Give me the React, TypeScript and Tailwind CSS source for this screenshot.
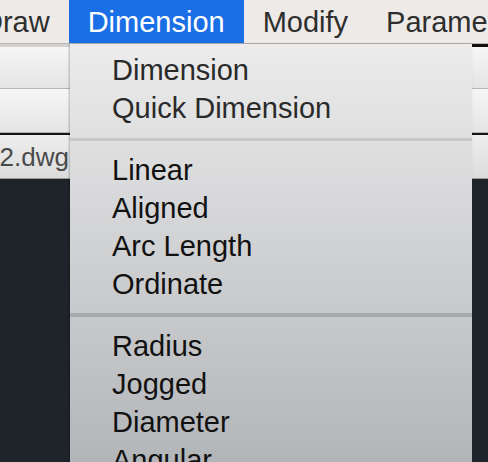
const groups: string[][] = [
  ['Dimension', 'Quick Dimension'],
  ['Linear', 'Aligned', 'Arc Length', 'Ordinate'],
  ['Radius', 'Jogged', 'Diameter', 'Angular', 'Baseline', 'Continue'],
];

const topMenus = ['Draw', 'Dimension', 'Modify', 'Parametric'];

function MenuBar() {
  return (
    <div className="h-[44px] flex items-stretch bg-[#edeae7] border-b border-[#b8b6b4] overflow-hidden whitespace-nowrap">
      <div className="flex -ml-[37px]">
        {topMenus.map((m) => (
          <div
            key={m}
            className={
              m === 'Dimension'
                ? 'px-[19px] leading-[44px] bg-[#1b6fe6] text-white'
                : 'px-[19px] leading-[44px] text-[#2e2e2e]'
            }
          >
            {m}
          </div>
        ))}
      </div>
    </div>
  );
}

function ToolRow({ h }: { h: string }) {
  return (
    <div className={`${h} bg-gradient-to-b from-[#f6f6f6] to-[#e4e4e4] border-b border-[#b4b4b4]`} />
  );
}

function DropMenu() {
  return (
    <div className="absolute left-[70px] top-[44px] w-[402px] h-[430px] pt-[7px] bg-gradient-to-b from-[#ececec] via-[#cfd0d2] to-[#b1b4b7] shadow-[-1px_0_2px_rgba(0,0,0,0.25)]">
      {groups.map((g, gi) => (
        <div key={gi}>
          {gi > 0 && (
            <div className="h-[24px] flex items-center">
              <div
                className={
                  gi === 1 ? 'h-[3px] w-full bg-[#c6c7c8]' : 'h-[4px] w-full bg-[#a8aaac]'
                }
              />
            </div>
          )}
          {g.map((item) => (
            <div
              key={item}
              className={
                gi === 0
                  ? 'h-[38px] leading-[38px] pl-[42px] text-[#2a2a2a]'
                  : 'h-[38px] leading-[38px] pl-[42px] text-[#111]'
              }
            >
              {item}
            </div>
          ))}
        </div>
      ))}
    </div>
  );
}

export default function App() {
  return (
    <div
      className="relative w-[488px] h-[462px] overflow-hidden bg-[#1f242b] text-[29px]"
      style={{ fontFamily: '"Liberation Sans", Arial, sans-serif' }}
    >
      <MenuBar />
      <div className="flex h-[3px]">
        <div className="flex-1 bg-[#d2d2d2]" />
        <div className="w-[16px] bg-[#111]" />
      </div>
      <ToolRow h="h-[42px]" />
      <ToolRow h="h-[44px]" />
      <div className="h-[2px] bg-[#151515]" />
      <div className="h-[44px] bg-gradient-to-b from-[#eeeeee] to-[#dcdcdc] border-b border-[#9a9a9a] flex">
        <div className="w-[69px] overflow-hidden flex justify-end whitespace-nowrap text-[26px] leading-[44px] text-[#4a4a4a]">
          Drawing2.dwg
        </div>
      </div>

      {/* open Dimension menu */}
      <DropMenu />
    </div>
  );
}
